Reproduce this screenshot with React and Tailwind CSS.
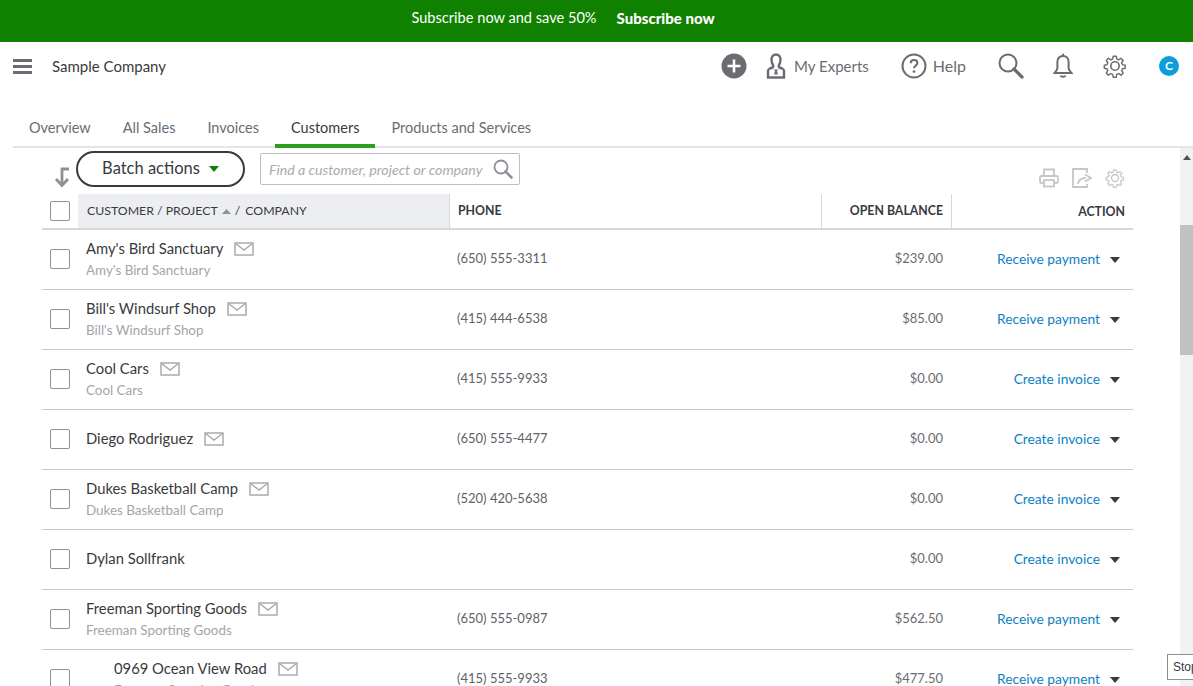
import React from 'react';

const rows = [
  { name: "Amy's Bird Sanctuary", sub: "Amy's Bird Sanctuary", phone: '(650) 555-3311', balance: '$239.00', action: 'Receive payment' },
  { name: "Bill's Windsurf Shop", sub: "Bill's Windsurf Shop", phone: '(415) 444-6538', balance: '$85.00', action: 'Receive payment' },
  { name: 'Cool Cars', sub: 'Cool Cars', phone: '(415) 555-9933', balance: '$0.00', action: 'Create invoice' },
  { name: 'Diego Rodriguez', phone: '(650) 555-4477', balance: '$0.00', action: 'Create invoice', mail: true },
  { name: 'Dukes Basketball Camp', sub: 'Dukes Basketball Camp', phone: '(520) 420-5638', balance: '$0.00', action: 'Create invoice' },
  { name: 'Dylan Sollfrank', balance: '$0.00', action: 'Create invoice', noMail: true },
  { name: 'Freeman Sporting Goods', sub: 'Freeman Sporting Goods', phone: '(650) 555-0987', balance: '$562.50', action: 'Receive payment' },
  { name: '0969 Ocean View Road', sub: 'Freeman Sporting Goods', phone: '(415) 555-9933', balance: '$477.50', action: 'Receive payment', child: true },
];

const MailIcon = () => (
  <svg width="20" height="14" viewBox="0 0 20 14" fill="none" stroke="#a9abb0" strokeWidth="1.5" className="ml-[11px] shrink-0">
    <rect x="1" y="1" width="18" height="12" />
    <path d="M1.5 1.5 10 8l8.5-6.5" />
  </svg>
);

const Gear = ({ size, color }) => (
  <svg width={size} height={size} viewBox="0 0 24 24" fill="none" stroke={color} strokeWidth="1.6" strokeLinejoin="round">
    <path d="M10.3 1.5h3.4l.6 3 2.1.9 2.6-1.7 2.4 2.4-1.7 2.6.9 2.1 3 .6v3.4l-3 .6-.9 2.1 1.7 2.6-2.4 2.4-2.6-1.7-2.1.9-.6 3h-3.4l-.6-3-2.1-.9-2.6 1.7-2.4-2.4 1.7-2.6-.9-2.1-3-.6v-3.4l3-.6.9-2.1-1.7-2.6 2.4-2.4 2.6 1.7 2.1-.9z" transform="translate(12 12) scale(.9) translate(-12.3 -12.3)" />
    <circle cx="12" cy="12" r="4.2" />
  </svg>
);

const Caret = ({ className }) => (
  <svg width="10" height="6" viewBox="0 0 10 6" className={className}>
    <path d="M0 0h10L5 6z" fill="currentColor" />
  </svg>
);

const Row = ({ row }) => (
  <div className="flex h-[60px] border-b border-[#c9c9c9] items-center pb-[2px] text-[#393a3d]">
    <div className="w-[36px] pl-2 shrink-0">
      <div className="w-5 h-5 rounded-[2px] border border-[#8d9096] bg-white" />
    </div>
    <div className={`w-[372px] shrink-0 flex flex-col justify-center ${row.child ? 'pl-9' : 'pl-2'}`}>
      <div className="flex items-center h-5 text-[14.8px]">
        <span>{row.name}</span>
        {!row.noMail && <MailIcon />}
      </div>
      {row.sub && <div className="text-[13.4px] text-[#a3a5a9] mt-px h-[19px]">{row.sub}</div>}
    </div>
    <div className="w-[372px] shrink-0 pl-[7px] text-[13px] text-[#5f6064]">{row.phone}</div>
    <div className="w-[130px] shrink-0 pr-[9px] text-right text-[13px] text-[#6b6c72]">{row.balance}</div>
    <div className="flex-1 flex justify-end items-center pr-[13px] mt-[2px]">
      <span className="text-[13.8px] text-[#0d7fc4]">{row.action}</span>
      <Caret className="ml-[10px] text-[#393a3d]" />
    </div>
  </div>
);

export default function App() {
  return (
    <div className="relative w-[1193px] h-[686px] overflow-hidden bg-white flex flex-col font-['Lato','Noto_Sans',sans-serif]">
      <div className="h-[42px] shrink-0 bg-[#108000] text-white flex items-center justify-center pr-[67px] pb-[6px]">
        <span className="text-[14.6px]">Subscribe now and save 50%</span>
        <span className="ml-5 text-[15px] font-black">Subscribe now</span>
      </div>

      <div className="h-[48px] shrink-0 flex items-center pl-[13px] text-[#393a3d]">
        <div className="flex flex-col gap-[3px] w-[19px]">
          <div className="h-[3px] bg-[#6b6c72]" />
          <div className="h-[3px] bg-[#6b6c72]" />
          <div className="h-[3px] bg-[#6b6c72]" />
        </div>
        <span className="ml-5 text-[15px]">Sample Company</span>
        <div className="ml-auto flex items-center text-[#6b6c72] text-base pr-[14px]">
          <svg width="26" height="26" viewBox="0 0 26 26">
            <circle cx="13" cy="13" r="12.5" fill="#6b6c72" />
            <path d="M13 6.5v13M6.5 13h13" stroke="#fff" strokeWidth="2.6" />
          </svg>
          <svg width="20" height="26" viewBox="0 0 20 26" fill="none" stroke="#6b6c72" strokeWidth="2.4" className="ml-[19px]">
            <path d="M10 1.5c3 0 4.500 2.200 4.500 5s-1 5-1.800 6.300l.5 1.700 3 1c1 .4 1.800 1.300 1.800 2.400v6.600H2v-6.600c0-1.100.8-2 1.800-2.400l3-1 .5-1.700C6.500 11.500 5.500 9.300 5.500 6.500s1.500-5 4.500-5z" />
            <path d="M8 16.500h4l-1 2 1 3H8l1-3z" fill="#6b6c72" stroke="none" />
          </svg>
          <span className="ml-2 text-[15px]">My Experts</span>
          <svg width="26" height="26" viewBox="0 0 26 26" fill="none" className="ml-[32px]">
            <circle cx="13" cy="13" r="11.500" stroke="#6b6c72" strokeWidth="2" />
            <path d="M9.700 10.300c0-2 1.500-3.200 3.400-3.200s3.300 1.200 3.300 2.900c0 2.600-3.400 2.700-3.400 5.300" stroke="#6b6c72" strokeWidth="2" />
            <circle cx="13" cy="18.600" r="1.300" fill="#6b6c72" />
          </svg>
          <span className="ml-[6px]">Help</span>
          <svg width="26" height="26" viewBox="0 0 26 26" fill="none" stroke="#6b6c72" className="ml-[32px]">
            <circle cx="10" cy="10" r="8.500" strokeWidth="2" />
            <path d="M16 16l8 8" strokeWidth="3.200" strokeLinecap="round" />
          </svg>
          <svg width="20" height="26" viewBox="0 0 20 26" fill="none" stroke="#6b6c72" strokeWidth="2" className="ml-[29px]">
            <path d="M10 3c-3.600 0-5.600 2.700-5.600 6v6c0 2-1.200 3-2.900 5h17c-1.700-2-2.900-3-2.900-5V9c0-3.300-2-6-5.600-6z" />
            <path d="M10 .8V3M7.500 22.500c.5 1.700 4.500 1.700 5 0" />
          </svg>
          <div className="ml-[30px]"><Gear size={24} color="#6b6c72" /></div>
          <div className="ml-[32px] w-5 h-5 rounded-full bg-[#0d9ddb] text-white text-xs font-bold flex items-center justify-center">C</div>
        </div>
      </div>

      <div className="mt-[18px] h-[40px] shrink-0 ml-[13px] flex text-[14.5px] text-[#6b6c72] border-b-2 border-[#e3e5e8]">
        <div className="px-4 pt-[9px]">Overview</div>
        <div className="px-4 pt-[9px]">All Sales</div>
        <div className="px-4 pt-[9px]">Invoices</div>
        <div className="px-4 pt-[9px] h-[40px] border-b-4 border-[#2ca01c] text-[#393a3d]">Customers</div>
        <div className="px-4 pt-[9px]">Products and Services</div>
      </div>

      <div className="flex-1 flex min-h-0">
        <div className="flex-1 min-w-0 pl-[42px] pr-[47px]">
          <div className="h-[46px] flex items-center">
            <svg width="20" height="22" viewBox="0 0 20 22" fill="none" stroke="#8d9096" strokeWidth="2.800" className="ml-[10px] mt-[12px] shrink-0">
              <path d="M17 3h-7v16M4 13l6 6.500 6-6.500" />
            </svg>
            <div className="ml-[4px] w-[169px] h-9 rounded-full border-2 border-[#393a3d] flex items-center justify-center text-[16.5px] text-[#393a3d] -mt-[5px] shrink-0">
              <span>Batch actions</span>
              <Caret className="ml-[9px] text-[#108000]" />
            </div>
            <div className="ml-[15px] w-[260px] h-8 rounded-[2px] border border-[#babec5] flex items-center pl-2 pr-[6px] text-[14.2px] italic text-[#a9abb0] -mt-[5px] shrink-0">
              <span className="pt-[2px]">Find a customer, project or company</span>
              <svg width="20" height="20" viewBox="0 0 20 20" fill="none" stroke="#8d9096" className="ml-auto">
                <circle cx="8" cy="8" r="6.500" strokeWidth="1.800" />
                <path d="M12.500 12.500l6 6" strokeWidth="2.600" strokeLinecap="round" />
              </svg>
            </div>
            <div className="ml-auto mr-2 mt-[14px] flex items-center gap-[13px] shrink-0">
              <svg width="20" height="20" viewBox="0 0 20 20" fill="none" stroke="#c4c6ca" strokeWidth="1.800">
                <path d="M5 8V1.500h10V8M5 15H2.500a1.500 1.500 0 0 1-1.500-1.500V9.500A1.500 1.500 0 0 1 2.500 8h15A1.500 1.500 0 0 1 19 9.500v4a1.500 1.500 0 0 1-1.500 1.500H15" />
                <rect x="5" y="12" width="10" height="6.500" />
              </svg>
              <svg width="20" height="20" viewBox="0 0 20 20" fill="none" stroke="#c4c6ca" strokeWidth="1.800">
                <path d="M15 5V1H1v18h14v-3" />
                <path d="M6 16c.5-4 3-6 8-6M13 6.500l6 3.500-6 3.500" />
              </svg>
              <Gear size={20} color="#c4c6ca" />
            </div>
          </div>

          <div className="flex h-[36px] border-b-2 border-[#d4d7dc] text-[12.3px] text-[#393a3d]">
            <div className="w-[36px] pl-2 shrink-0 flex items-center">
              <div className="w-5 h-5 rounded-[2px] border border-[#8d9096] bg-white" />
            </div>
            <div className="w-[372px] shrink-0 pl-[9px] flex items-center bg-[#eceef1] border-r border-[#d4d7dc]">
              <span>CUSTOMER / PROJECT</span>
              <svg width="9" height="5" viewBox="0 0 9 5" className="ml-[4px]"><path d="M4.500 0l4.500 5H0z" fill="#8d9096" /></svg>
              <span className="ml-[4px]">/</span>
              <span className="ml-[5px]">COMPANY</span>
            </div>
            <div className="w-[372px] shrink-0 pl-2 flex items-center font-bold border-r border-[#d4d7dc]">PHONE</div>
            <div className="w-[130px] shrink-0 pr-2 flex items-center justify-end font-bold border-r border-[#d4d7dc]">OPEN BALANCE</div>
            <div className="flex-1 pr-2 flex items-center justify-end font-bold pt-[2px]">ACTION</div>
          </div>

          {rows.map((row) => (
            <Row key={row.name} row={row} />
          ))}
        </div>

        <div className="w-[13px] shrink-0 bg-[#f1f1f1] relative flex flex-col items-center">
          <Caret className="mt-[7px] rotate-180 text-[#505050] w-2 h-[5px]" />
          <div className="mt-[65px] w-full h-[130px] bg-[#c1c1c1]" />
        </div>
      </div>

      <div className="absolute left-[1167px] top-[654px] h-[26px] w-[40px] bg-white border border-[#8d8d8d] pl-[5px] text-xs leading-[24px] text-[#393a3d] font-['Liberation_Sans',sans-serif]">
        Stop
      </div>
    </div>
  );
}
